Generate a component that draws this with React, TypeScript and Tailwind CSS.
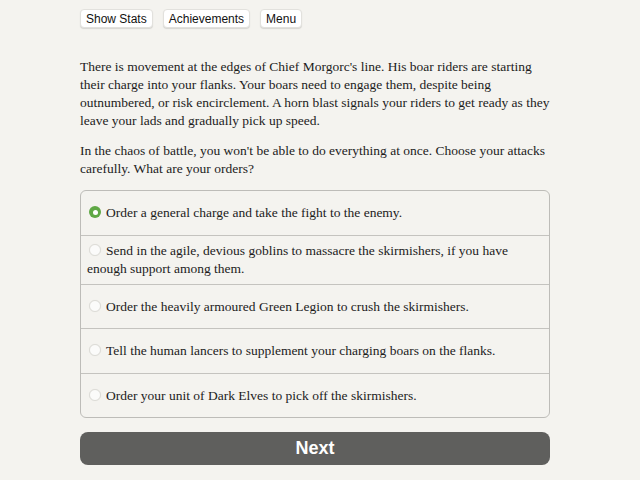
import React, { useState } from 'react';

const choices = [
  'Order a general charge and take the fight to the enemy.',
  'Send in the agile, devious goblins to massacre the skirmishers, if you have enough support among them.',
  'Order the heavily armoured Green Legion to crush the skirmishers.',
  'Tell the human lancers to supplement your charging boars on the flanks.',
  'Order your unit of Dark Elves to pick off the skirmishers.',
];

// row padding tuned per row so borders land where the original does
const rowPad = ['py-[13px]', 'py-[6px]', 'py-[12.5px]', 'py-[13px]', 'py-[12.5px]'];

const Radio: React.FC<{ checked: boolean }> = ({ checked }) =>
  checked ? (
    <span className="inline-block align-[-1px] w-[12px] h-[12px] rounded-full bg-[#5fa845] mr-[5px] relative">
      <span className="absolute left-[3.5px] top-[3.5px] w-[5px] h-[5px] rounded-full bg-white" />
    </span>
  ) : (
    <span className="inline-block align-[-1px] w-[12px] h-[12px] rounded-full bg-[#fbfbfa] border border-[#dddcd7] shadow-[0_0_1px_rgba(0,0,0,0.08)] mr-[5px]" />
  );

export default function App() {
  const [selected, setSelected] = useState(0);

  return (
    <div className="min-h-[480px] bg-[#f4f3ef] text-[#1c1c1c]">
      <div className="w-[470px] ml-[80px] pt-[9px]">
        <div className="flex gap-[10px] font-['Liberation_Sans',sans-serif] text-[12px] text-[#111]">
          {['Show Stats', 'Achievements', 'Menu'].map(b => (
            <button
              key={b}
              className="h-[19px] px-[5px] bg-white rounded-[4px] border border-[#e2e1dd] shadow-[0_1px_1px_rgba(0,0,0,0.12)] leading-none"
            >
              {b}
            </button>
          ))}
        </div>

        <div className="font-['Liberation_Serif',serif] text-[13.5px] leading-[18px] mt-[30px]">
          <p>
            There is movement at the edges of Chief Morgorc's line. His boar riders are starting their charge into your flanks. Your boars need to engage them, despite being outnumbered, or risk encirclement. A horn blast signals your riders to get ready as they leave your lads and gradually pick up speed.
          </p>
          <p className="mt-[12px]">
            In the chaos of battle, you won't be able to do everything at once. Choose your attacks carefully. What are your orders?
          </p>

          <div className="mt-[12px] border border-[#bdbcb8] rounded-[6px] overflow-hidden">
            {choices.map((c, i) => (
              <div
                key={i}
                onClick={() => setSelected(i)}
                className={`px-[6px] ${rowPad[i]} ${i > 0 ? 'border-t border-[#c4c3bf]' : ''} cursor-pointer`}
              >
                <span className="pl-[2px]">
                  <Radio checked={selected === i} />
                </span>
                {c}
              </div>
            ))}
          </div>
        </div>

        <button className="mt-[14px] w-full h-[33px] rounded-[8px] bg-[#5f5f5d] text-white font-['Liberation_Sans',sans-serif] font-bold text-[18px]">
          Next
        </button>
      </div>
    </div>
  );
}
